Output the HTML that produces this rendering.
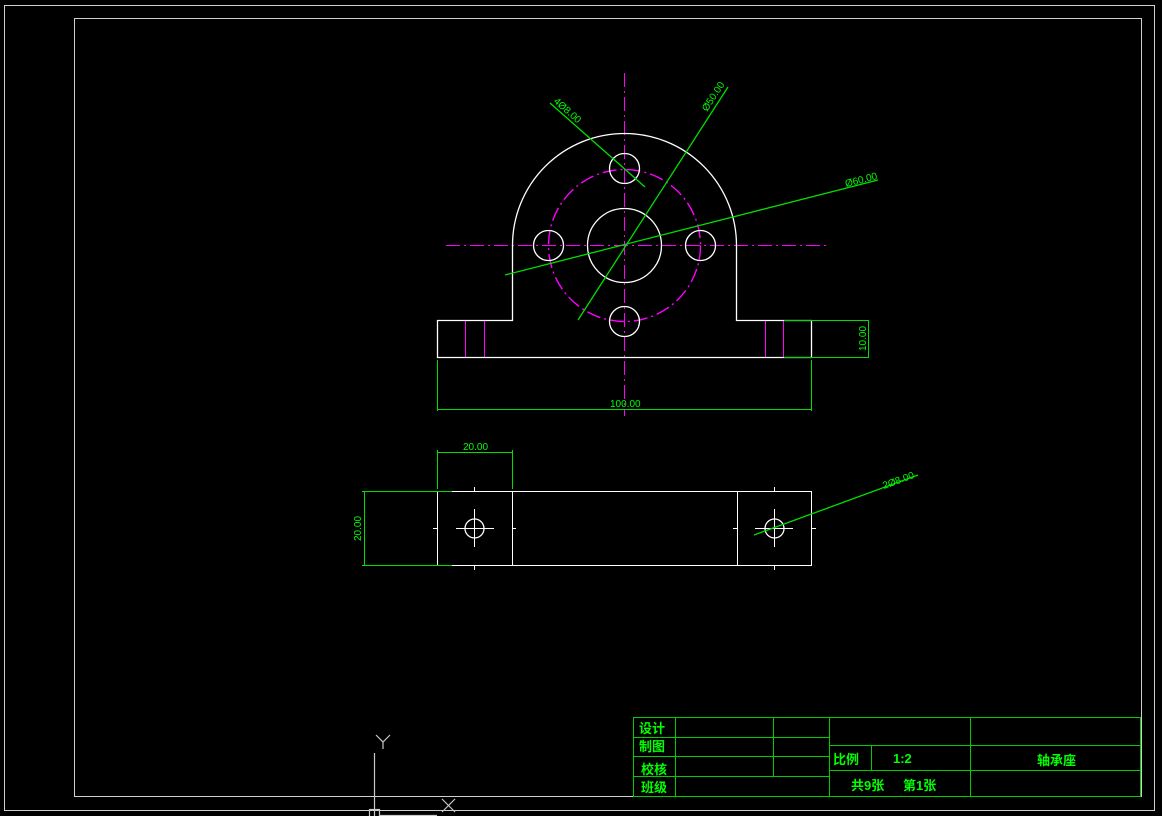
<!DOCTYPE html>
<html><head><meta charset="utf-8"><style>
html,body{margin:0;padding:0;background:#000;width:1162px;height:816px;overflow:hidden}
svg{display:block}
text{font-family:"Liberation Sans","Noto Sans CJK SC",sans-serif;fill:#00ff00}
</style></head><body>
<svg width="1162" height="816" viewBox="0 0 1162 816" xmlns="http://www.w3.org/2000/svg">
<g fill="none" stroke="#d0d0d0" stroke-width="1.3" shape-rendering="crispEdges">
<rect x="4.5" y="5.5" width="1150" height="805"/>
<rect x="74.5" y="18.5" width="1067" height="778"/>
</g>
<!-- magenta center lines -->
<g stroke="#ff00ff" stroke-width="1.4" fill="none">
<line x1="624.5" y1="73" x2="624.5" y2="416" stroke-dasharray="14,4,2,4" shape-rendering="crispEdges"/>
<line x1="446" y1="245.5" x2="830" y2="245.5" stroke-dasharray="14,4,2,4" shape-rendering="crispEdges"/>
<circle cx="624.5" cy="245.5" r="76" stroke-dasharray="14,4,2,4"/>
<g shape-rendering="crispEdges">
<line x1="465.5" y1="321" x2="465.5" y2="357"/>
<line x1="484.5" y1="321" x2="484.5" y2="357"/>
<line x1="765.5" y1="321" x2="765.5" y2="357"/>
<line x1="783.5" y1="321" x2="783.5" y2="357"/>
</g>
</g>
<!-- front view -->
<g stroke="#ffffff" stroke-width="1.3" fill="none">
<path d="M512.5 245.5 A112 112 0 0 1 736.5 245.5 L736.5 320.5 L811.5 320.5 L811.5 357.5 L437.5 357.5 L437.5 320.5 L512.5 320.5 Z"/>
<circle cx="624.5" cy="245.5" r="37"/>
<circle cx="624.5" cy="168.5" r="15"/>
<circle cx="548.5" cy="245.5" r="15"/>
<circle cx="700.5" cy="245.5" r="15"/>
<circle cx="624.5" cy="321.5" r="15"/>
</g>
<!-- bottom view -->
<g stroke="#ffffff" stroke-width="1.3" fill="none">
<rect x="437.5" y="491.5" width="374" height="74" shape-rendering="crispEdges"/>
<g shape-rendering="crispEdges">
<line x1="512.5" y1="491" x2="512.5" y2="566"/>
<line x1="737.5" y1="491" x2="737.5" y2="566"/>
<line x1="456" y1="528.5" x2="494" y2="528.5"/><line x1="474.5" y1="509" x2="474.5" y2="547"/>
<line x1="755" y1="528.5" x2="793" y2="528.5"/><line x1="774.5" y1="509" x2="774.5" y2="547"/>
<line x1="474.5" y1="487" x2="474.5" y2="491"/><line x1="474.5" y1="566" x2="474.5" y2="570"/>
<line x1="774.5" y1="487" x2="774.5" y2="491"/><line x1="774.5" y1="566" x2="774.5" y2="570"/>
<line x1="433" y1="528.5" x2="437" y2="528.5"/><line x1="512" y1="528.5" x2="516" y2="528.5"/>
<line x1="733" y1="528.5" x2="737" y2="528.5"/><line x1="812" y1="528.5" x2="816" y2="528.5"/>
</g>
<circle cx="474.5" cy="528.5" r="9.5"/>
<circle cx="774.5" cy="528.5" r="9.5"/>
</g>
<!-- dimensions -->
<g stroke="#00e000" stroke-width="1.3" fill="none">
<g shape-rendering="crispEdges">
<line x1="437.5" y1="360" x2="437.5" y2="411"/>
<line x1="811.5" y1="360" x2="811.5" y2="411"/>
<line x1="437.5" y1="409.5" x2="811.5" y2="409.5"/>
<line x1="784" y1="320.5" x2="869" y2="320.5"/>
<line x1="784" y1="357.5" x2="869" y2="357.5"/>
<line x1="868.5" y1="320.5" x2="868.5" y2="357.5"/>
<line x1="437.5" y1="450" x2="437.5" y2="489"/>
<line x1="512.5" y1="450" x2="512.5" y2="489"/>
<line x1="437.5" y1="452.5" x2="512.5" y2="452.5"/>
<line x1="362" y1="491.5" x2="452" y2="491.5"/>
<line x1="362" y1="565.5" x2="452" y2="565.5"/>
<line x1="364.5" y1="491.5" x2="364.5" y2="565.5"/>
</g>
<line x1="550" y1="103" x2="645" y2="187"/>
<line x1="578" y1="320" x2="728" y2="87"/>
<line x1="505" y1="275" x2="878" y2="180"/>
<line x1="754" y1="535" x2="918" y2="475"/>
</g>
<g font-size="10">
<text x="610" y="407">100.00</text>
<text x="463" y="450">20.00</text>
<text transform="translate(866,351) rotate(-90)">10.00</text>
<text transform="translate(361,541) rotate(-90)">20.00</text>
<text transform="translate(553,102) rotate(41.5)">4Ø8.00</text>
<text transform="translate(707,112) rotate(-57)">Ø50.00</text>
<text transform="translate(846,187) rotate(-14.3)">Ø60.00</text>
<text transform="translate(884,489) rotate(-20)">2Ø8.00</text>
</g>
<!-- title block -->
<g stroke="#00cc00" stroke-width="1.3" fill="none" shape-rendering="crispEdges">
<rect x="633.5" y="717.5" width="507" height="79"/>
<line x1="633" y1="737.5" x2="829" y2="737.5"/>
<line x1="633" y1="756.5" x2="829" y2="756.5"/>
<line x1="633" y1="776.5" x2="829" y2="776.5"/>
<line x1="829" y1="745.5" x2="1141" y2="745.5"/>
<line x1="829" y1="770.5" x2="1141" y2="770.5"/>
<line x1="675.5" y1="717" x2="675.5" y2="796"/>
<line x1="773.5" y1="717" x2="773.5" y2="776"/>
<line x1="829.5" y1="717" x2="829.5" y2="796"/>
<line x1="871.5" y1="745" x2="871.5" y2="770"/>
<line x1="970.5" y1="717" x2="970.5" y2="796"/>
</g>
<g font-size="13" font-weight="bold">
<text x="639" y="733">设计</text>
<text x="639" y="751">制图</text>
<text x="641" y="774">校核</text>
<text x="641" y="792">班级</text>
<text x="833" y="764">比例</text>
<text x="893" y="763">1:2</text>
<text x="1037" y="765">轴承座</text>
<text x="851" y="790">共9张</text>
<text x="903" y="790">第1张</text>
</g>
<!-- UCS icon -->
<g stroke="#c8c8c8" stroke-width="1.2" fill="none">
<path d="M376 735 L383 742 L390 735 M383 742 L383 749"/>
<line x1="374.5" y1="753" x2="374.5" y2="816"/>
<rect x="369.5" y="809.5" width="10" height="8"/>
<line x1="379" y1="815.5" x2="437" y2="815.5"/>
<path d="M442 799 L455 812 M455 799 L442 812"/>
</g>
</svg>
</body></html>
